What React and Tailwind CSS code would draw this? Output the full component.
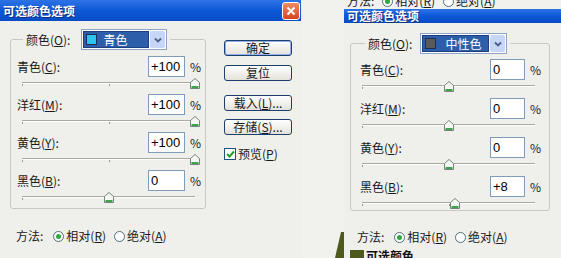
import React from 'react';

const CJK = "font-['Noto_Sans_CJK_SC','Noto_Sans',sans-serif]";
const NUM = "font-['Liberation_Sans',Arial,sans-serif]";

const LEFT = {
  input: 'w-[37px]',
  pct: 'w-[14px] pl-[5px]',
  slider: 'h-[17px] ml-[5px] mr-[4px]',
  lastSlider: 'h-[17px] ml-[5px] mr-[4px]',
};

const RIGHT = {
  input: 'w-[35px]',
  pct: 'w-[15px] pl-[5px]',
  slider: 'h-[18px] ml-[2px] mr-[5px]',
  lastSlider: 'h-[15px] ml-[2px] mr-[5px]',
};

function Thumb() {
  return (
    <svg width="10" height="11" viewBox="0 0 10 11">
      <path d="M0.5 10.5V4.5L5 0.5L9.5 4.5V10.5Z" fill="#f6f9f3" stroke="#74847a" />
      <path d="M1.5 8.5H8.5M1.5 9.5H8.5" stroke="#3da34d" />
    </svg>
  );
}

function Slider({ value, className }) {
  const pct = ((value + 100) / 200) * 100;
  return (
    <div className={`relative ${className}`}>
      <div className="absolute inset-x-0 top-[5px] h-[1px] bg-[#a9a9a2]" />
      <div className="absolute inset-x-0 top-[6px] h-[1px] bg-white" />
      <div className="absolute left-0 top-[7px] h-[2px] w-[1px] bg-[#9a9a92]" />
      <div className="absolute left-1/2 top-[7px] h-[2px] w-[1px] bg-[#9a9a92]" />
      <div className="absolute top-[1px]" style={{ left: `calc(${pct}% - 5px)` }}>
        <Thumb />
      </div>
    </div>
  );
}

function Row({ label, u, value, pos, cfg, last }) {
  return (
    <div>
      <div className="flex h-[21px] items-center">
        <span className="flex-1">
          {label}(<u>{u}</u>):
        </span>
        <div className={`flex h-[21px] items-center border border-[#7f9db9] bg-white pl-[2px] text-[13px] text-black ${NUM} ${cfg.input}`}>
          {value}
        </div>
        <span className={cfg.pct}>%</span>
      </div>
      <Slider value={pos} className={last ? cfg.lastSlider : cfg.slider} />
    </div>
  );
}

function Combo({ swatch, text, width, gap }) {
  return (
    <div className={`flex h-[21px] border border-[#8fa5c4] bg-white p-[1px] ${width}`}>
      <div className="flex flex-1 items-center border border-[#1d3f80] bg-[#2d5ea9] pl-[2px]">
        <span className={`h-[11px] w-[11px] border border-[#1a2f58] ${swatch}`} />
        <span className={`text-white ${gap}`}>{text}</span>
      </div>
      <div className="ml-[1px] flex w-[15px] items-center justify-center rounded-[2px] bg-[#c6d6f6]">
        <svg width="8" height="6" viewBox="0 0 8 6">
          <path d="M1 1.5L4 4.5L7 1.5" fill="none" stroke="#4a5f8c" strokeWidth="1.8" />
        </svg>
      </div>
    </div>
  );
}

function Radio({ on }) {
  return (
    <span className="flex h-[11px] w-[11px] items-center justify-center rounded-full border border-[#4f6f78] bg-white">
      {on && <span className="h-[5px] w-[5px] rounded-full bg-[#2fa83e]" />}
    </span>
  );
}

function Method({ className }) {
  return (
    <div className={`flex h-[16px] items-center ${className}`}>
      <span>方法:</span>
      <span className="ml-[10px]"><Radio on /></span>
      <span className="ml-[2px]">相对(<u>R</u>)</span>
      <span className="ml-[8px]"><Radio /></span>
      <span className="ml-[2px]">绝对(<u>A</u>)</span>
    </div>
  );
}

function GroupBox({ cfg, box, legendGap, legendMl, combo, rows, pad }) {
  return (
    <div className={`rounded-[3px] border border-[#c9c9c0] ${box}`}>
      <div className="-mt-[11px] flex h-[21px]">
        <div className={`flex items-center bg-[#efefeb] px-[3px] ${legendMl}`}>
          <span>颜色(<u>O</u>):</span>
          <div className={legendGap}>{combo}</div>
        </div>
      </div>
      <div className={pad}>
        {rows.map((r, i) => (
          <Row key={r.label} {...r} cfg={cfg} last={i === rows.length - 1} />
        ))}
      </div>
    </div>
  );
}

function Button({ children, def, className }) {
  return (
    <div className={`flex h-[16px] items-center justify-center rounded-[3px] border border-[#1b3f6e] bg-gradient-to-b from-white to-[#e3e2da] ${def ? 'shadow-[inset_0_0_0_1px_#8fb0e8]' : ''} ${className}`}>
      {children}
    </div>
  );
}

function TitleBar({ className, children }) {
  return (
    <div className={`flex items-center bg-gradient-to-b from-[#2d73e6] via-[#0c58d8] to-[#0a4cc4] pl-[3px] text-[12px] font-bold text-white [text-shadow:1px_1px_0_#0a2f7a] ${className}`}>
      <span className="flex-1 leading-none">可选颜色选项</span>
      {children}
    </div>
  );
}

export default function App() {
  const leftRows = [
    { label: '青色', u: 'C', value: '+100', pos: 100 },
    { label: '洋红', u: 'M', value: '+100', pos: 100 },
    { label: '黄色', u: 'Y', value: '+100', pos: 100 },
    { label: '黑色', u: 'B', value: '0', pos: 0 },
  ];
  const rightRows = [
    { label: '青色', u: 'C', value: '0', pos: 0 },
    { label: '洋红', u: 'M', value: '0', pos: 0 },
    { label: '黄色', u: 'Y', value: '0', pos: 0 },
    { label: '黑色', u: 'B', value: '+8', pos: 8 },
  ];

  return (
    <div className={`flex h-[258px] w-[561px] overflow-hidden bg-[#f1f1ee] text-[12px] leading-none text-[#1a1a1a] ${CJK}`}>
      {/* left dialog */}
      <div className="flex w-[301px] flex-col bg-[#efefeb]">
        <TitleBar className="h-[21px]">
          <div className="mr-[1px] flex h-[18px] w-[18px] items-center justify-center rounded-[3px] border border-white bg-gradient-to-b from-[#f08a62] to-[#d6431c]">
            <svg width="10" height="10" viewBox="0 0 10 10">
              <path d="M1.5 1.5L8.5 8.5M8.5 1.5L1.5 8.5" stroke="white" strokeWidth="2" />
            </svg>
          </div>
        </TitleBar>
        <div className="flex">
          <div className="ml-[10px] mt-[18px] w-[196px]">
            <GroupBox
              cfg={LEFT}
              box="h-[170px]"
              legendMl="ml-[12px]"
              legendGap="ml-[11px]"
              pad="pl-[6px] pr-[6px] pt-[6px]"
              rows={leftRows}
              combo={<Combo swatch="bg-[#2ec4ef]" text="青色" width="w-[86px]" gap="ml-[6px]" />}
            />
            <Method className="ml-[6px] mt-[19px]" />
          </div>
          <div className="ml-[18px] mt-[19px] flex w-[68px] flex-col">
            <Button def>确定</Button>
            <Button className="mt-[9px]">复位</Button>
            <Button className="mt-[14px]">载入(<u>L</u>)...</Button>
            <Button className="mt-[8px]">存储(<u>S</u>)...</Button>
            <div className="mt-[13px] flex items-center">
              <span className="flex h-[12px] w-[12px] items-center justify-center border border-[#1c5180] bg-white">
                <svg width="9" height="8" viewBox="0 0 9 8">
                  <path d="M1 4L3.5 6.5L8 1.5" fill="none" stroke="#21a121" strokeWidth="2" />
                </svg>
              </span>
              <span className="ml-[2px]">预览(<u>P</u>)</span>
            </div>
          </div>
        </div>
      </div>

      {/* gap between dialogs */}
      <div className="flex w-[43px] flex-col justify-end">
        <svg width="43" height="26" viewBox="0 0 43 26" className="block">
          <path d="M40 0H43V26H34Z" fill="#4d5a1c" />
        </svg>
      </div>

      {/* right dialog */}
      <div className="flex w-[217px] flex-col bg-[#efefeb]">
        <div className="h-[9px] overflow-hidden bg-[#f1f1ee]">
          <div className="-mt-[7px] flex h-[16px] items-center pl-[3px]">
            <span>方法:</span>
            <span className="ml-[8px]"><Radio on /></span>
            <span className="ml-[2px]">相对(<u>R</u>)</span>
            <span className="ml-[8px]"><Radio /></span>
            <span className="ml-[2px]">绝对(<u>A</u>)</span>
          </div>
        </div>
        <TitleBar className="h-[14px] overflow-hidden" />
        <div className="ml-[6px] mt-[20px] w-[200px]">
          <GroupBox
            cfg={RIGHT}
            box="h-[168px]"
            legendMl="ml-[14px]"
            legendGap="ml-[8px]"
            pad="pl-[9px] pr-[9px] pt-[5px]"
            rows={rightRows}
            combo={<Combo swatch="bg-[#5a5a5a]" text="中性色" width="w-[87px]" gap="ml-[9px]" />}
          />
        </div>
        <Method className="ml-[13px] mt-[18px]" />
        <div className="mt-auto h-[8px] overflow-hidden">
          <div className="flex pl-[6px]">
            <span className="h-[8px] w-[14px] bg-[#4d5a1c]" />
            <span className="ml-[2px] font-bold text-[#111]">可选颜色</span>
          </div>
        </div>
      </div>
    </div>
  );
}
